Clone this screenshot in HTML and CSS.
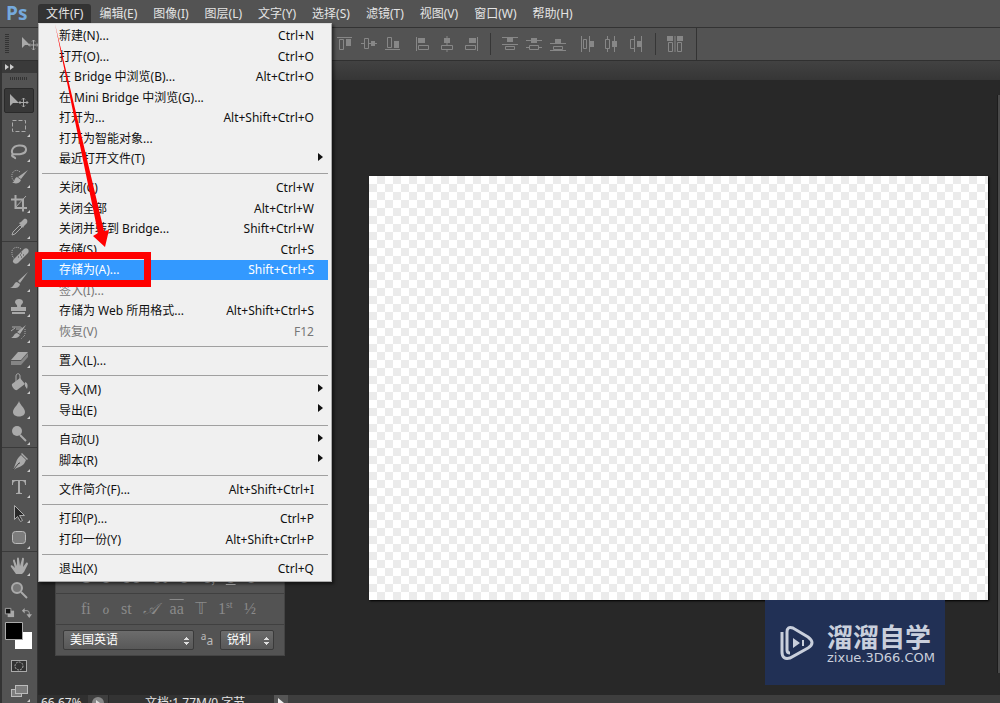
FILE: index.html
```html
<!DOCTYPE html>
<html lang="zh-CN">
<head>
<meta charset="utf-8">
<title>Ps</title>
<link rel="stylesheet" href="styles.css">
</head>
<body>
<header class="menubar">
  <span class="logo">Ps</span>
  <nav class="menus">
    <div class="menu-item">
      <button class="menu-button open">文件(F)</button>
      <div class="dropdown">
        <div class="group">
          <button class="entry"><span>新建(N)...</span><span>Ctrl+N</span></button>
          <button class="entry"><span>打开(O)...</span><span>Ctrl+O</span></button>
          <button class="entry"><span>在 Bridge 中浏览(B)...</span><span>Alt+Ctrl+O</span></button>
          <button class="entry"><span>在 Mini Bridge 中浏览(G)...</span></button>
          <button class="entry"><span>打开为...</span><span>Alt+Shift+Ctrl+O</span></button>
          <button class="entry"><span>打开为智能对象...</span></button>
          <button class="entry sub"><span>最近打开文件(T)</span></button>
        </div>
        <div class="group">
          <button class="entry"><span>关闭(C)</span><span>Ctrl+W</span></button>
          <button class="entry"><span>关闭全部</span><span>Alt+Ctrl+W</span></button>
          <button class="entry"><span>关闭并转到 Bridge...</span><span>Shift+Ctrl+W</span></button>
          <button class="entry"><span>存储(S)</span><span>Ctrl+S</span></button>
          <button class="entry active"><span>存储为(A)...</span><span>Shift+Ctrl+S</span></button>
          <button class="entry" disabled><span>签入(I)...</span></button>
          <button class="entry"><span>存储为 Web 所用格式...</span><span>Alt+Shift+Ctrl+S</span></button>
          <button class="entry" disabled><span>恢复(V)</span><span>F12</span></button>
        </div>
        <div class="group">
          <button class="entry"><span>置入(L)...</span></button>
        </div>
        <div class="group">
          <button class="entry sub"><span>导入(M)</span></button>
          <button class="entry sub"><span>导出(E)</span></button>
        </div>
        <div class="group">
          <button class="entry sub"><span>自动(U)</span></button>
          <button class="entry sub"><span>脚本(R)</span></button>
        </div>
        <div class="group">
          <button class="entry"><span>文件简介(F)...</span><span>Alt+Shift+Ctrl+I</span></button>
        </div>
        <div class="group">
          <button class="entry"><span>打印(P)...</span><span>Ctrl+P</span></button>
          <button class="entry"><span>打印一份(Y)</span><span>Alt+Shift+Ctrl+P</span></button>
        </div>
        <div class="group">
          <button class="entry"><span>退出(X)</span><span>Ctrl+Q</span></button>
        </div>
      </div>
    </div>
    <button class="menu-button">编辑(E)</button>
    <button class="menu-button">图像(I)</button>
    <button class="menu-button">图层(L)</button>
    <button class="menu-button">文字(Y)</button>
    <button class="menu-button">选择(S)</button>
    <button class="menu-button">滤镜(T)</button>
    <button class="menu-button">视图(V)</button>
    <button class="menu-button">窗口(W)</button>
    <button class="menu-button">帮助(H)</button>
  </nav>
</header>

<div class="options">
  <span class="grip-v"></span>
  <svg class="current" viewBox="0 0 18 16"><path class="solid" d="M1 1v11l3-3h5z"/><path class="line" d="M12.500 4v10M7.500 9h10M11 5.500l1.500-1.500 1.500 1.500M11 12.500l1.500 1.500 1.500-1.500M9 7.500l-1.500 1.500 1.500 1.500M16 7.500l1.500 1.500-1.500 1.500"/></svg>
  <div class="aligns">
    <div class="align-group">
      <svg viewBox="0 0 16 16"><path class="line" d="M0 1.500h15M2.500 3.500h4v10h-4z"/><path class="solid" d="M9 3h5v7H9z"/></svg>
      <svg viewBox="0 0 16 16"><path class="line" d="M0 7.500h3M7 7.500h9M3.500 2.500h4v10h-4z"/><path class="solid" d="M10 5h4v5h-4z"/></svg>
      <svg viewBox="0 0 16 16"><path class="line" d="M0 13.500h15M2.500 1.500h4v10h-4z"/><path class="solid" d="M9 5h5v7H9z"/></svg>
    </div>
    <div class="align-group">
      <svg viewBox="0 0 16 16"><path class="line" d="M1.500 1v14M3.500 9.500h10v4h-10z"/><path class="solid" d="M3 2h7v5H3z"/></svg>
      <svg viewBox="0 0 16 16"><path class="line" d="M8 0v9M8 14v2M2.500 9.500h11v4h-11z"/><path class="solid" d="M5 2h6v5H5z"/></svg>
      <svg viewBox="0 0 16 16"><path class="line" d="M14.500 1v14M2.500 9.500h10v4h-10z"/><path class="solid" d="M6 2h7v5H6z"/></svg>
    </div>
    <div class="align-group ruled">
      <svg viewBox="0 0 16 16"><path class="line" d="M0 1.500h16M0 8.500h16M3.500 10.500h9v3h-9z"/><path class="solid" d="M5 2h6v4H5z"/></svg>
      <svg viewBox="0 0 16 16"><path class="line" d="M0 4.500h16M0 11.500h3M13 11.500h3M3.500 9.500h9v4h-9z"/><path class="solid" d="M5 2h6v5H5z"/></svg>
      <svg viewBox="0 0 16 16"><path class="line" d="M0 7.500h16M0 14.500h16M3.500 10.500h9v3h-9z"/><path class="solid" d="M5 3h6v4H5z"/></svg>
    </div>
    <div class="align-group">
      <svg viewBox="0 0 16 16"><path class="line" d="M1.500 0v16M3.500 3.500h3v9h-3zM9.500 0v16"/><path class="solid" d="M10 5h4v6h-4z"/></svg>
      <svg viewBox="0 0 16 16"><path class="line" d="M3.500 0v3M3.500 13v3M1.500 3.500h4v9h-4zM10.500 0v16"/><path class="solid" d="M8 5h5v6H8z"/></svg>
      <svg viewBox="0 0 16 16"><path class="line" d="M6.500 0v16M2.500 3.500h4v9h-4zM13.500 0v16"/><path class="solid" d="M9 5h4v6H9z"/></svg>
    </div>
    <div class="align-group ruled">
      <svg viewBox="0 0 16 16"><path class="solid" d="M0 0h6v5H0zM10 0h6v5h-6z"/><path class="line" d="M1.500 6.500h4v9h-4zM10.500 6.500h4v9h-4zM8 0v16"/></svg>
    </div>
  </div>
</div>

<div class="body">
  <aside class="toolbar">
    <div class="collapse"><svg viewBox="0 0 10 6"><path d="M0 0l4 3-4 3zM5 0l4 3-4 3z"/></svg></div>
    <span class="grip-h"></span>
    <div class="tools">
      <button class="tool plain on" aria-label="移动"><svg viewBox="0 0 24 24"><path class="solid" d="M3 5v12l3-3h6z"/><path class="line" d="M16.500 9v9M12 13.500h9M15 10.500l1.500-1.500 1.500 1.500M15 16.500l1.500 1.500 1.500-1.500M13.500 12l-1.500 1.500 1.500 1.500M19.500 12l1.500 1.500-1.500 1.500"/></svg></button>
      <button class="tool" aria-label="选框"><svg viewBox="0 0 24 24"><path class="line" stroke-dasharray="4 2" d="M5.500 6.500h13v11h-13z"/></svg></button>
      <button class="tool" aria-label="套索"><svg viewBox="0 0 24 24"><path class="thick" d="M7 15C3 12 5 6 12 5.500c9-.5 9 7 2 8.500-4 1-9-1-9 1.500 0 2 4 1 3 3.500"/></svg></button>
      <button class="tool" aria-label="快速选择"><svg viewBox="0 0 24 24"><path class="line" stroke-dasharray="1 1" d="M13 7C9 3 4 7 5 12c0 3 2 4 4 4"/><path class="solid" d="M21 5l-7 9-3-2zM10 12l4 3c-2 5-7 3-9 3 3-1 2-5 5-6z"/></svg></button>
      <button class="tool" aria-label="裁剪"><svg viewBox="0 0 24 24"><path class="thick" d="M8.500 4v13H20M4 8.500h12v12"/><path class="line" d="M8 17L19 5"/></svg></button>
      <button class="tool" aria-label="吸管"><svg viewBox="0 0 24 24"><path class="line" d="M5 19l1-3 7-7 2 2-7 7z"/><path class="solid" d="M12 7l2-1 3-3c3-1 4 2 3 4l-3 3-1 2z"/></svg></button>
    </div>
    <div class="tools">
      <button class="tool" aria-label="修复"><svg viewBox="0 0 24 24"><path class="line" stroke-dasharray="1 1" d="M14 5C9 1 4 5 5 9c0 3 1 5 3 6"/><path class="solid" d="M7 15L17 5c3-2 6 1 4 4L11 19c-3 2-7-1-4-4z"/><path class="dots" d="M11 13h1M14 13h1M13 11h1M14 9h1M16 11h1"/></svg></button>
      <button class="tool" aria-label="画笔"><svg viewBox="0 0 24 24"><path class="solid" d="M21 3l-8 11-2-2zM10 13l3 2c-1 5-6 4-10 4 4-1 4-6 7-6z"/></svg></button>
      <button class="tool" aria-label="图章"><svg viewBox="0 0 24 24"><path class="solid" d="M10 12c1-2-2-3-2-5 0-4 8-4 8 0 0 2-3 3-2 5h5v4H4v-4zM5 17h13v2H5z"/></svg></button>
      <button class="tool" aria-label="历史画笔"><svg viewBox="0 0 24 24"><path class="solid" d="M19 5l-6 9-3-2zM10 13l3 2c-2 4-6 3-9 3 3-1 3-5 6-5z"/><path class="line" d="M5 7h8c2 0 2 2 0 2H9M4 11l4-3"/><path class="line" stroke-dasharray="1 1" d="M18 9v6l-4 4"/></svg></button>
      <button class="tool" aria-label="橡皮擦"><svg viewBox="0 0 24 24"><path class="solid" d="M4 14l7-8h10l-7 8z"/><path class="mid" d="M4 15h10v4H4zM14 15l7-8v4l-7 8z"/></svg></button>
      <button class="tool" aria-label="油漆桶"><svg viewBox="0 0 24 24"><path class="solid" d="M5 13l8-6 5 6-8 6c-2 1-6-4-5-6zM18 11c3 1 3 4 2 7l-2-3z"/><path class="line" d="M9 12V5c0-3 4-3 4 0v6"/></svg></button>
      <button class="tool" aria-label="模糊"><svg viewBox="0 0 24 24"><path class="solid" d="M12 4c1 4 6 7 6 11 0 6-12 6-12 0 0-4 5-7 6-11z"/></svg></button>
      <button class="tool" aria-label="减淡"><svg viewBox="0 0 24 24"><circle class="solid" cx="10" cy="9" r="5"/><path class="thick" d="M13 13l6 6"/></svg></button>
    </div>
    <div class="tools">
      <button class="tool" aria-label="钢笔"><svg viewBox="0 0 24 24"><path class="solid" d="M14 5l5 5-1 2c-1 4-7 5-12 8 3-6 3-10 6-13zM15 3l6 6-1 1-6-6z"/><path class="cut" d="M6 20l6-7M12 13h1"/></svg></button>
      <button class="tool" aria-label="文字"><svg viewBox="0 0 24 24"><path class="solid" d="M5 5h14v5h-1c0-3-1-4-4-4h-1v11c0 1 1 1 2 1v1H9v-1c1 0 2 0 2-1V6h-1C7 6 6 7 6 10H5z"/></svg></button>
      <button class="tool" aria-label="路径选择"><svg viewBox="0 0 24 24"><path class="hollow" d="M7.500 4.500v14l3-3 3 5 2-1-3-5h5z"/></svg></button>
      <button class="tool" aria-label="圆角矩形"><svg viewBox="0 0 24 24"><rect class="shape" x="5.500" y="5.500" width="13" height="12" rx="3"/></svg></button>
    </div>
    <div class="tools">
      <button class="tool" aria-label="抓手"><svg viewBox="0 0 24 24"><path class="solid" d="M9 20L4 13c-1-2 1-2 2-1l2 2-2-7c0-2 2-2 2 0l2 5V5c0-2 2-2 2 0l1 7 2-7c0-2 2-1 2 0l-1 8 3-4c1-1 2 0 2 1l-4 8-2 2z"/></svg></button>
      <button class="tool plain" aria-label="缩放"><svg viewBox="0 0 24 24"><circle class="lens" cx="10" cy="9" r="5"/><path class="thick" d="M14 13l6 6"/></svg></button>
    </div>
    <div class="defaults">
      <svg viewBox="0 0 12 12"><path class="solid" d="M4 4h7v7H4z"/><path class="black" d="M1.500 1.500h6v6h-6z"/></svg>
      <svg viewBox="0 0 12 12"><path class="solid" d="M1 4l3-3v6zM6 8h6l-3 4z"/><path class="line" d="M3 4h3.500q2.500 0 2.500 2.500V9"/></svg>
    </div>
    <svg class="swatches" viewBox="0 0 30 30"><path fill="#fff" d="M11 11h17v17H11z"/><path fill="#000" stroke="#aaa" d="M1.500 1.500h17v17h-17z"/></svg>
    <button class="tool plain" aria-label="快速蒙版"><svg viewBox="0 0 24 24"><rect class="mask" x="4.500" y="6.500" width="15" height="11"/><circle class="line" stroke-dasharray="2 1" cx="12" cy="12" r="4"/></svg></button>
    <button class="tool" aria-label="屏幕模式"><svg viewBox="0 0 24 24"><rect class="shape" x="4.500" y="10.500" width="10" height="7"/><rect class="shape" x="8.500" y="6.500" width="12" height="8"/></svg></button>
  </aside>

  <div class="document">
    <div class="tabs"></div>
    <main class="workspace"><div class="canvas"></div></main>
    <footer class="status">
      <input class="zoom" aria-label="缩放比例" value="66.67%">
      <svg class="disc" viewBox="0 0 14 14"><circle cx="7" cy="7" r="6"/><path d="M5 4l4 3-4 3z"/></svg>
      <span class="info">文档:1.77M/0 字节</span>
      <button class="next" aria-label="更多"><svg viewBox="0 0 8 10"><path d="M1 0l6 5-6 5z"/></svg></button>
    </footer>
    <div class="dock"></div>
  </div>
</div>

<section class="panel">
  <div class="glyphs styles"><b>T</b><i>T</i><span>TT</span><span>Tт</span><span>T'</span><span>T,</span><u>T</u><s>T</s></div>
  <div class="glyphs"><span>fi</span><i>&#x2134;</i><span>st</span><i>&#x1D49C;</i><span class="over">aa</span><i>&#x1D54B;</i><span>1<sup>st</sup></span><span>½</span></div>
  <div class="fields">
    <select class="language" aria-label="语言"><option>美国英语</option></select>
    <label class="aa" for="smooth"><sup>a</sup>a</label>
    <select id="smooth" class="smooth"><option>锐利</option></select>
  </div>
</section>

<div class="watermark">
  <svg viewBox="0 0 34 36"><path d="M2 7v20q0 8 8 6l18-10q8-5 0-11L13 3Q7 1 7 7v18q0 3 3 3"/><path class="play" d="M13 13l7 5-7 5zM22 15h2v6h-2z"/></svg>
  <div><strong>溜溜自学</strong><small>zixue.3D66.COM</small></div>
</div>

<svg class="callout" viewBox="0 0 122 268"><path d="M21 2L64 211l-5 3 12 11 4-17-5 1z"/><path class="box" d="M4.500 233.500h109v28H4.500z"/></svg>
</body>
</html>
```
FILE: styles.css
```css
* { box-sizing: border-box; }
body {
  margin: 0;
  height: 100vh;
  overflow: hidden;
  display: flex;
  flex-direction: column;
  position: relative;
  background: #282828;
  color: #e4e4e4;
  font: 12px/20px "Noto Sans", "Noto Sans CJK SC", sans-serif;
}
button, input, select {
  font: inherit;
  color: inherit;
  background: none;
  border: 0;
  padding: 0;
  margin: 0;
}
svg { display: block; }
.solid { fill: #aaa; }
.line { fill: none; stroke: #aaa; }
.thick { fill: none; stroke: #aaa; stroke-width: 2; }
.mid { fill: #858585; }
.cut, .dots { fill: none; stroke: #444; }
.hollow { fill: #282828; stroke: #aaa; }
.shape { fill: #7c7c7c; stroke: #bbb; }
.mask { fill: #333; stroke: #aaa; }
.lens { fill: #777; stroke: #aaa; stroke-width: 2; }
.black { fill: #111; stroke: #aaa; }

.menubar {
  display: flex;
  height: 27px;
  background: #535353;
}
.logo {
  width: 38px;
  padding-left: 6px;
  color: #75a9dc;
  font: bold 19px/26px "Open Sans", sans-serif;
}
.menus { display: flex; padding-top: 4px; }
.menu-item { position: relative; }
.menu-button {
  height: 19px;
  padding: 0 8px;
  line-height: 19px;
  white-space: nowrap;
}
.menu-button.open { background: #333; border-radius: 3px 3px 0 0; }

.dropdown {
  position: absolute;
  z-index: 3;
  top: 19px;
  left: 0;
  width: 294px;
  padding: 2px 3px;
  background: #f0f0f0;
  border: 1px solid #aaa;
  border-top-color: #ddd;
  box-shadow: 2px 2px 3px #0008;
  color: #111;
}
.group + .group {
  margin-top: 4px;
  padding-top: 4px;
  border-top: 1px solid #a0a0a0;
}
.entry {
  display: flex;
  align-items: center;
  justify-content: space-between;
  width: 100%;
  height: 20px;
  padding: 0 14px 0 17px;
  white-space: nowrap;
  line-height: 20px;
}
.entry:nth-child(even) { height: 21px; }
.entry:disabled { color: #777; }
.entry.active { background: #3399ff; color: #fff; }
.entry.sub { padding-right: 5px; }
.entry.sub::after {
  content: "";
  border: 4px solid transparent;
  border-left: 5px solid #111;
  border-right: 0;
  margin-bottom: 5px;
}

.options {
  display: flex;
  align-items: center;
  height: 34px;
  padding: 0 5px;
  background: #535353;
  border-top: 1px solid #333;
  border-bottom: 1px solid #303030;
}
.grip-v {
  width: 4px;
  height: 20px;
  background: repeating-linear-gradient(#333 0 1px, #535353 1px 2px);
}
.current { width: 18px; height: 16px; margin-left: 12px; }
.aligns {
  display: flex;
  margin-left: 291px;
  height: 100%;
  border-right: 1px solid #333;
  padding-right: 6px;
}
.align-group { display: flex; align-items: center; gap: 8px; padding: 0 7px; }
.align-group svg { width: 16px; height: 16px; opacity: .6; }
.align-group.ruled {
  background: linear-gradient(#363636, #363636) left center / 1px 22px no-repeat;
  margin-left: 4px;
  padding-left: 12px;
}

.body { flex: 1; min-height: 0; display: flex; }
.toolbar {
  width: 38px;
  background: #535353;
  border-left: 2px solid #333;
  border-right: 1px solid #333;
}
.collapse { height: 12px; padding: 3px; background: #3a3a3a; }
.collapse svg { width: 10px; height: 6px; fill: #ccc; }
.grip-h {
  display: block;
  width: 18px;
  height: 3px;
  margin: 4px auto 8px 8px;
  background: repeating-linear-gradient(90deg, #333 0 1px, #535353 1px 2px);
}
.tools + .tools { border-top: 1px solid #3a3a3a; padding-top: 1px; }
.tool {
  display: flex;
  align-items: center;
  justify-content: center;
  position: relative;
  width: 30px;
  height: 25px;
  margin-left: 2px;
}
.tool:nth-child(even) { height: 26px; }
.tool svg { width: 24px; height: 24px; }
.tool.on { background: #383838; border: 1px solid #2a2a2a; border-radius: 2px; }
.tool:not(.plain)::after {
  content: "";
  position: absolute;
  right: 4px;
  bottom: 2px;
  border-left: 3px solid transparent;
  border-bottom: 3px solid #ccc;
}
.defaults { display: flex; justify-content: space-between; padding: 3px 5px 3px 2px; }
.defaults svg { width: 11px; height: 11px; }
.swatches { width: 30px; height: 30px; margin: 0 0 2px 2px; }

.document {
  flex: 1;
  min-width: 0;
  display: flex;
  flex-direction: column;
  position: relative;
}
.tabs { height: 19px; background: linear-gradient(#424242, #363636); }
.workspace { flex: 1; display: flex; padding: 96px 12px 95px 331px; }
.canvas {
  flex: 1;
  background: repeating-conic-gradient(#ebebeb 0 25%, #fff 0 50%) 0 0 / 16px 16px;
  box-shadow: 1px 1px 2px #000;
}
.dock {
  position: absolute;
  right: 0;
  top: 34px;
  bottom: 30px;
  width: 3px;
  background: #4a4a4a;
  border-left: 1px solid #1c1c1c;
}
.status {
  display: flex;
  align-items: flex-start;
  height: 8px;
  overflow: hidden;
  background: #3e3e3e;
}
.zoom { width: 50px; height: 16px; padding-left: 3px; background: #303030; line-height: 16px; }
.disc { width: 14px; height: 14px; margin: 1px 3px; fill: #888; }
.disc path { fill: #ddd; }
.info { flex: 0 0 166px; padding-left: 36px; line-height: 16px; background: #333; border-left: 1px solid #282828; }
.next { padding: 3px; background: #555; }
.next svg { width: 8px; height: 10px; fill: #eee; }

.panel {
  position: absolute;
  z-index: 2;
  left: 55px;
  bottom: 47px;
  width: 230px;
  background: #535353;
  border: 1px solid #444;
}
.glyphs {
  display: flex;
  align-items: center;
  justify-content: space-between;
  height: 31px;
  padding: 0 28px 0 25px;
  color: #8a8a8a;
  font: 16px/24px "Liberation Serif", "DejaVu Serif", "DejaVu Sans", serif;
  border-bottom: 1px solid #404040;
}
.glyphs.styles { color: #bbb; }
.glyphs sup { font-size: 10px; line-height: 10px; }
.over { text-decoration: overline; }
.fields { display: flex; align-items: center; padding: 5px 7px; }
.fields select {
  appearance: none;
  height: 20px;
  padding-left: 6px;
  line-height: 18px;
  border: 1px solid #3a3a3a;
  border-radius: 2px;
  color: #fff;
  background:
    conic-gradient(from 135deg at 50% 0, #ddd 90deg, transparent 0) right 4px top 6px / 5px 3px no-repeat,
    conic-gradient(from -45deg at 50% 100%, #ddd 90deg, transparent 0) right 4px top 11px / 5px 3px no-repeat,
    linear-gradient(#6c6c6c, #585858);
}
.fields .language { width: 131px; }
.fields .smooth { width: 54px; }
.aa { width: 26px; text-align: center; color: #bbb; line-height: 18px; }
.aa sup { font-size: 10px; line-height: 10px; }

.watermark {
  position: absolute;
  z-index: 2;
  right: 55px;
  bottom: 18px;
  width: 180px;
  height: 85px;
  display: flex;
  align-items: center;
  gap: 13px;
  padding-left: 15px;
  background: #213055;
  color: #c9cfdc;
}
.watermark svg { width: 34px; height: 36px; fill: none; stroke: #c9cfdc; stroke-width: 3; }
.watermark .play { fill: #c9cfdc; stroke: none; }
.watermark strong {
  display: block;
  font: bold 26px/30px "Noto Sans CJK SC", sans-serif;
  white-space: nowrap;
}
.watermark small { display: block; font: 13px/14px "DejaVu Sans", sans-serif; white-space: nowrap; }

.callout {
  position: absolute;
  z-index: 4;
  left: 34px;
  top: 22px;
  width: 122px;
  height: 268px;
  fill: #f00;
  pointer-events: none;
}
.callout .box { fill: none; stroke: #f00; stroke-width: 7; }
```
